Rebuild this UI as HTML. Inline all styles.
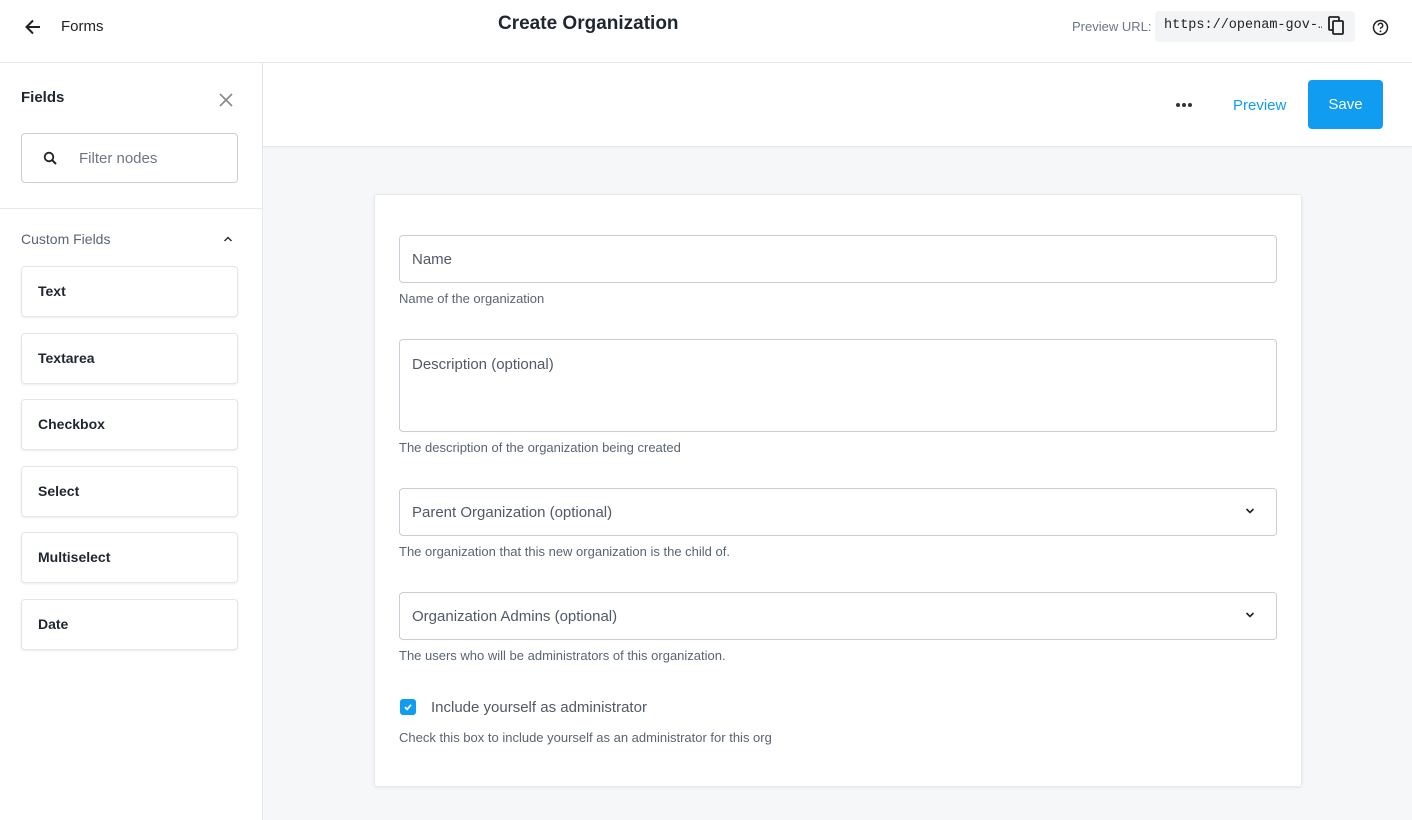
<!DOCTYPE html>
<html><head><meta charset="utf-8"><style>
*{box-sizing:border-box;margin:0;padding:0}
body{width:1412px;height:820px;overflow:hidden;font-family:"Liberation Sans",sans-serif;background:#fff;position:relative;color:#2b3340}
.a{position:absolute}
.hdr{left:0;top:0;width:1412px;height:63px;border-bottom:1px solid #e3e9ef;background:#fff}
.side{left:0;top:63px;width:263px;height:757px;border-right:1px solid #e3e9ef;background:#fff}
.main{left:263px;top:63px;width:1149px;height:757px;background:#f6f7f9}
.bar{left:0;top:0;width:1149px;height:84px;background:#fff;border-bottom:1px solid #e3e9ef;box-shadow:0 1px 2px rgba(0,0,0,.04)}
.item{left:21px;width:217px;height:51px;border:1px solid #e3e6ea;border-radius:4px;background:#fff;box-shadow:0 1px 2px rgba(0,0,0,.08);font-weight:bold;font-size:14px;color:#1f2630;padding-left:16px;line-height:49px}
.card{left:111px;top:131px;width:928px;height:593px;background:#fff;border:1px solid #e6e9ec;border-radius:3px;box-shadow:0 1px 3px rgba(0,0,0,.06)}
.inp{left:24px;width:878px;border:1px solid #c7ced6;border-radius:4px;font-size:15px;color:#505a66;padding-left:12px}
.help{left:24px;font-size:13px;color:#5a6572}
</style></head><body>
<div class="a hdr">
 <svg class="a" style="left:23px;top:17px" width="20" height="20" viewBox="0 0 20 20"><path d="M17 10H4M10 3.5L3.5 10 10 16.5" stroke="#222" stroke-width="2" fill="none"/></svg>
 <div class="a" style="left:61px;top:18px;font-size:15px;color:#222">Forms</div>
 <div class="a" style="left:498px;top:13px;font-size:19px;font-weight:bold;color:#1f2630">Create Organization</div>
 <div class="a" style="left:1072px;top:19px;font-size:13px;color:#6b7785">Preview URL:</div>
 <div class="a" style="left:1155px;top:11px;width:200px;height:31px;background:#f3f4f6;border-radius:4px"></div>
 <div class="a" style="left:1164px;top:18px;font-family:'Liberation Mono',monospace;font-size:13.5px;color:#222;width:158px;white-space:nowrap;overflow:hidden">https://openam-gov-…</div>
 <svg class="a" style="left:1328px;top:16px" width="18" height="20" viewBox="0 0 18 20"><rect x="1" y="1" width="10" height="13" rx="1" fill="none" stroke="#222" stroke-width="1.8"/><rect x="5" y="5" width="10" height="13" rx="1" fill="#f3f4f6" stroke="#222" stroke-width="1.8"/></svg>
 <svg class="a" style="left:1372px;top:19px" width="17" height="17" viewBox="0 0 17 17"><circle cx="8.5" cy="8.5" r="7" fill="none" stroke="#222" stroke-width="1.5"/><path d="M6.3 6.5a2.2 2.2 0 1 1 3 2c-.6.3-.8.7-.8 1.4" fill="none" stroke="#222" stroke-width="1.4"/><circle cx="8.5" cy="12.3" r=".9" fill="#222"/></svg>
</div>
<div class="a side">
 <div class="a" style="left:21px;top:26px;font-size:15px;font-weight:bold;color:#1f2630">Fields</div>
 <svg class="a" style="left:218px;top:29px" width="16" height="16" viewBox="0 0 16 16"><path d="M2 2L14 14M14 2L2 14" stroke="#888" stroke-width="1.6"/></svg>
 <div class="a" style="left:21px;top:70px;width:217px;height:50px;border:1px solid #c7ced6;border-radius:4px"></div>
 <svg class="a" style="left:43px;top:88px" width="15" height="15" viewBox="0 0 15 15"><circle cx="6" cy="6" r="4.3" fill="none" stroke="#222" stroke-width="1.8"/><path d="M9.2 9.2L13 13" stroke="#222" stroke-width="2"/></svg>
 <div class="a" style="left:79px;top:87px;font-size:15px;color:#6b7785">Filter nodes</div>
 <div class="a" style="left:0;top:145px;width:262px;height:1px;background:#e3e9ef"></div>
 <div class="a" style="left:21px;top:168px;font-size:14px;color:#5a6572">Custom Fields</div>
 <svg class="a" style="left:223px;top:172px" width="10" height="8" viewBox="0 0 10 8"><path d="M1.5 6L5 2.5 8.5 6" stroke="#333" stroke-width="1.5" fill="none"/></svg>
 <div class="a item" style="top:203px">Text</div>
 <div class="a item" style="top:270px">Textarea</div>
 <div class="a item" style="top:336px">Checkbox</div>
 <div class="a item" style="top:403px">Select</div>
 <div class="a item" style="top:469px">Multiselect</div>
 <div class="a item" style="top:536px">Date</div>
</div>
<div class="a main">
 <div class="a bar">
  <div class="a" style="left:913px;top:40px;width:4px;height:4px;border-radius:2px;background:#333;box-shadow:6px 0 #333,12px 0 #333"></div>
  <div class="a" style="left:970px;top:34px;font-size:15px;color:#109cf1">Preview</div>
  <div class="a" style="left:1045px;top:17px;width:75px;height:49px;background:#109cf1;border-radius:4px;color:#fff;font-size:15px;text-align:center;line-height:50px">Save</div>
 </div>
 <div class="a card">
  <div class="a inp" style="top:40px;height:48px;line-height:48px">Name</div>
  <div class="a help" style="top:96px">Name of the organization</div>
  <div class="a inp" style="top:144px;height:93px;padding-top:16px">Description (optional)</div>
  <div class="a help" style="top:245px">The description of the organization being created</div>
  <div class="a inp" style="top:293px;height:48px;line-height:48px">Parent Organization (optional)</div>
  <svg class="a" style="left:870px;top:312px" width="10" height="8" viewBox="0 0 10 8"><path d="M1.5 2L5 5.5 8.5 2" stroke="#222" stroke-width="1.6" fill="none"/></svg>
  <div class="a help" style="top:349px">The organization that this new organization is the child of.</div>
  <div class="a inp" style="top:397px;height:48px;line-height:48px">Organization Admins (optional)</div>
  <svg class="a" style="left:870px;top:416px" width="10" height="8" viewBox="0 0 10 8"><path d="M1.5 2L5 5.5 8.5 2" stroke="#222" stroke-width="1.6" fill="none"/></svg>
  <div class="a help" style="top:453px">The users who will be administrators of this organization.</div>
  <div class="a" style="left:25px;top:504px;width:16px;height:16px;border-radius:3px;background:#109cf1"></div>
  <svg class="a" style="left:28px;top:507px" width="10" height="10" viewBox="0 0 10 10"><path d="M2 5.2L4.2 7.3 8 2.8" stroke="#fff" stroke-width="1.8" fill="none"/></svg>
  <div class="a" style="left:56px;top:504px;font-size:15px;color:#505a66">Include yourself as administrator</div>
  <div class="a help" style="top:535px">Check this box to include yourself as an administrator for this org</div>
 </div>
</div>
</body></html>
